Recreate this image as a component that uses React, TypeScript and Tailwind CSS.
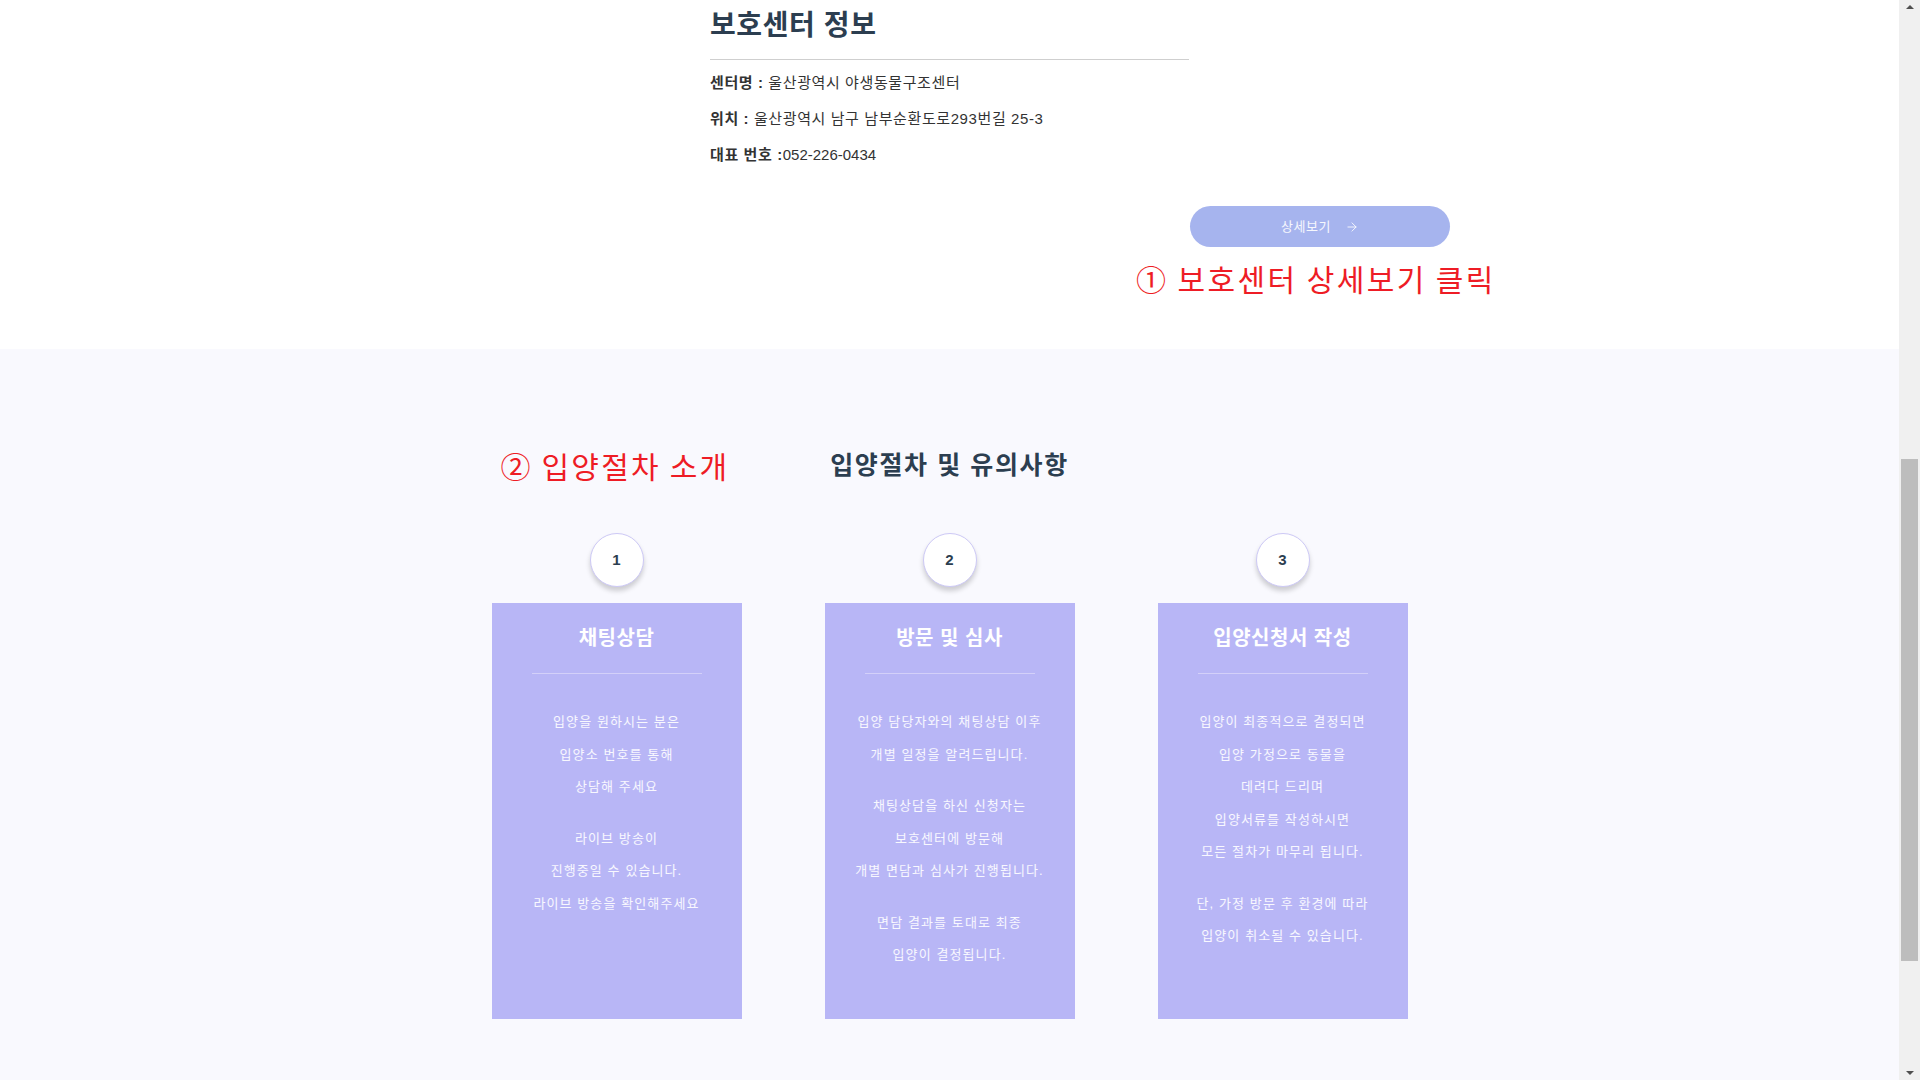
import { ArrowRight } from "lucide-react";

const steps = [
  {
    no: 1,
    title: "채팅상담",
    paragraphs: [
      ["입양을 원하시는 분은", "입양소 번호를 통해", "상담해 주세요"],
      ["라이브 방송이", "진행중일 수 있습니다.", "라이브 방송을 확인해주세요"],
    ],
  },
  {
    no: 2,
    title: "방문 및 심사",
    paragraphs: [
      ["입양 담당자와의 채팅상담 이후", "개별 일정을 알려드립니다."],
      ["채팅상담을 하신 신청자는", "보호센터에 방문해", "개별 면담과 심사가 진행됩니다."],
      ["면담 결과를 토대로 최종", "입양이 결정됩니다."],
    ],
  },
  {
    no: 3,
    title: "입양신청서 작성",
    paragraphs: [
      [
        "입양이 최종적으로 결정되면",
        "입양 가정으로 동물을",
        "데려다 드리며",
        "입양서류를 작성하시면",
        "모든 절차가 마무리 됩니다.",
      ],
      ["단, 가정 방문 후 환경에 따라", "입양이 취소될 수 있습니다."],
    ],
  },
];

const font = "font-['Liberation_Sans','Noto_Sans_CJK_KR',sans-serif]";

export default function App() {
  return (
    <div className={`flex h-screen w-full overflow-hidden bg-white ${font}`}>
      <main className="flex flex-1 flex-col">
        {/* 보호센터 정보 */}
        <section className="h-[349px] shrink-0 bg-white pt-[9px]">
          <div className="ml-[710px] w-[784px]">
            <div className="w-[479px]">
              <h2 className="text-[28px] font-bold leading-[34px] tracking-[0.6px] text-[#2c3e50]">
                보호센터 정보
              </h2>
              <div className="mt-[16px] h-px w-full bg-[#cfcfcf]" />
              <div className="mt-[13px] flex flex-col gap-[16px] text-[15px] leading-[20px] tracking-[0.6px] text-[#333]">
                <p>
                  <span className="font-bold">센터명 :</span> 울산광역시 야생동물구조센터
                </p>
                <p>
                  <span className="font-bold">위치 :</span> 울산광역시 남구 남부순환도로293번길 25-3
                </p>
                <p>
                  <span className="font-bold">대표 번호 :</span>
                  <span className="tracking-normal">052-226-0434</span>
                </p>
              </div>
            </div>

            <div className="mt-[41px] flex flex-col items-end">
              <button className="mr-[44px] flex h-[41px] w-[260px] items-center justify-center gap-[14px] rounded-full bg-[#a6b4ee] text-[13px] tracking-[0.5px] text-white/90">
                상세보기
                <ArrowRight size={14} strokeWidth={1.6} />
              </button>
              <p className="mt-[13px] w-[358px] whitespace-nowrap text-[30px] leading-[36px] tracking-[2.4px] text-[#ee1c25] font-['Noto_Sans_CJK_KR',sans-serif]">
                ① 보호센터 상세보기 클릭
              </p>
            </div>
          </div>
        </section>

        {/* 입양절차 */}
        <section className="flex-1 bg-[#f9f9fe] pt-[98px]">
          <div className="grid grid-cols-[1fr_auto_1fr] items-center">
            <p className="mr-[101px] justify-self-end whitespace-nowrap text-[30px] leading-[36px] tracking-[2.2px] text-[#ee1c25] font-['Noto_Sans_CJK_KR',sans-serif]">
              ② 입양절차 소개
            </p>
            <h3 className="text-[25px] font-bold leading-[32px] tracking-[1.6px] text-[#2c3e50]">
              입양절차 및 유의사항
            </h3>
            <div />
          </div>

          <div className="mt-[50px] flex justify-center gap-[83px]">
            {steps.map((step) => (
              <div key={step.no} className="flex w-[250px] flex-col items-center">
                <div className="flex h-[54px] w-[54px] items-center justify-center rounded-full border border-[#cdc9f6] bg-white text-[15px] font-bold text-[#2c3e50] shadow-[0_4px_5px_rgba(0,0,0,0.18)]">
                  {step.no}
                </div>
                <div className="mt-[16px] flex h-[416px] w-full flex-col items-center bg-[#b8b6f6] pt-[21px]">
                  <h4 className="text-[20px] font-bold leading-[28px] tracking-[0.5px] text-white">
                    {step.title}
                  </h4>
                  <div className="mt-[21px] h-px w-[170px] bg-[#d3d0f9]" />
                  <div className="mt-[32px] flex flex-col gap-[19px] text-center text-[13px] leading-[32.5px] tracking-[1.1px] text-white/90">
                    {step.paragraphs.map((lines, i) => (
                      <p key={i}>
                        {lines.map((line) => (
                          <span key={line} className="block">
                            {line}
                          </span>
                        ))}
                      </p>
                    ))}
                  </div>
                </div>
              </div>
            ))}
          </div>
        </section>
      </main>

      {/* 스크롤바 */}
      <aside className="flex w-[21px] shrink-0 flex-col items-center bg-[#f0f0f0]">
        <div className="mt-[5px] h-0 w-0 border-x-[4px] border-b-[4px] border-x-transparent border-b-[#505050]" />
        <div className="mt-[450px] h-[502px] w-[17px] bg-[#bdbdbd]" />
        <div className="mt-auto mb-[5px] h-0 w-0 border-x-[4px] border-t-[4px] border-x-transparent border-t-[#505050]" />
      </aside>
    </div>
  );
}
